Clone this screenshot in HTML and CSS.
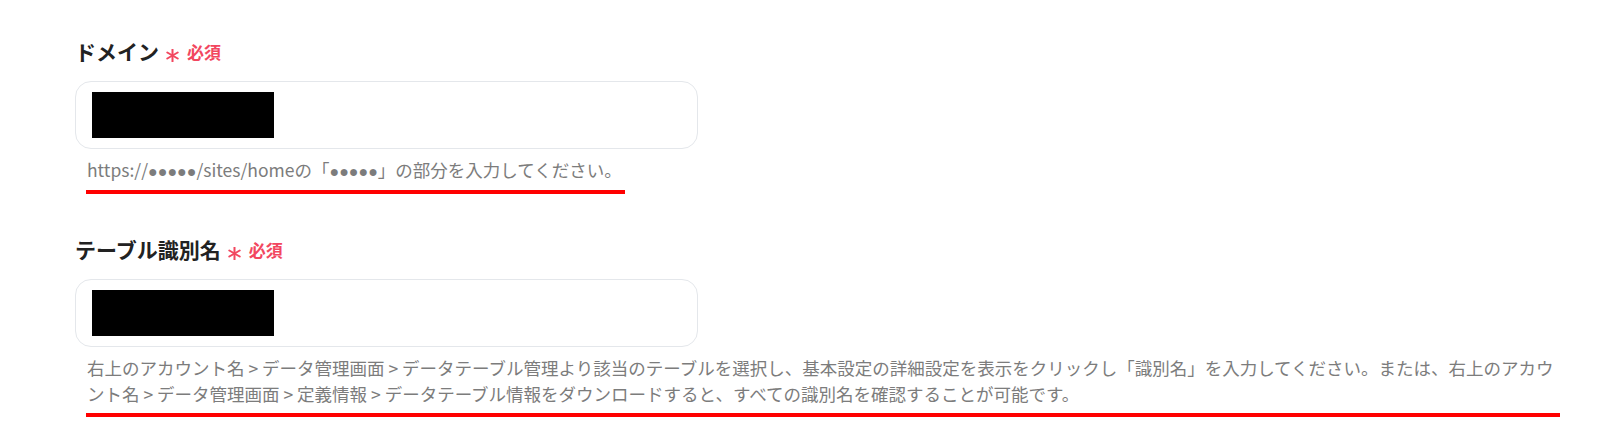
FILE: index.html
```html
<!DOCTYPE html>
<html lang="ja">
<head>
<meta charset="utf-8">
<title>設定</title>
<link rel="stylesheet" href="styles.css">
</head>
<body>
<div class="form">
  <section class="field field-domain">
    <div class="label-row">
      <span class="label">ドメイン</span>
      <span class="req">
        <svg class="ast" viewBox="0 0 13 13" width="13" height="13" aria-hidden="true">
          <line x1="6.5" y1="0.5" x2="6.5" y2="12.5"/>
          <line x1="1.3" y1="3.5" x2="11.7" y2="9.5"/>
          <line x1="1.3" y1="9.5" x2="11.7" y2="3.5"/>
        </svg>
        <span class="req-text">必須</span>
      </span>
    </div>
    <div class="input"><div class="redact"></div></div>
    <p class="help"><span class="line">https://<span class="dots">●●●●●</span>/sites/homeの「<span class="dots">●●●●●</span>」の部分を入力してください。</span></p>
    <div class="mark mark-short"></div>
  </section>

  <section class="field field-table">
    <div class="label-row">
      <span class="label">テーブル識別名</span>
      <span class="req">
        <svg class="ast" viewBox="0 0 13 13" width="13" height="13" aria-hidden="true">
          <line x1="6.5" y1="0.5" x2="6.5" y2="12.5"/>
          <line x1="1.3" y1="3.5" x2="11.7" y2="9.5"/>
          <line x1="1.3" y1="9.5" x2="11.7" y2="3.5"/>
        </svg>
        <span class="req-text">必須</span>
      </span>
    </div>
    <div class="input"><div class="redact"></div></div>
    <p class="help"><span class="line">右上のアカウント名 &gt; データ管理画面 &gt; データテーブル管理より該当のテーブルを選択し、基本設定の詳細設定を表示をクリックし「識別名」を入力してください。または、右上のアカウ</span><span class="line">ント名 &gt; データ管理画面 &gt; 定義情報 &gt; データテーブル情報をダウンロードすると、すべての識別名を確認することが可能です。</span></p>
    <div class="mark mark-long"></div>
  </section>
</div>
</body>
</html>
```

FILE: styles.css
```css
html, body {
  margin: 0;
  padding: 0;
  background: #ffffff;
}

body {
  width: 1600px;
  height: 445px;
  overflow: hidden;
  font-family: "Noto Sans CJK JP", "Noto Sans", sans-serif;
}

.form {
  display: flex;
  flex-direction: column;
  padding: 36px 0 0 75px;
}

.field {
  display: flex;
  flex-direction: column;
  align-items: flex-start;
}

.field-table {
  margin-top: 40px;
}

.label-row {
  display: flex;
  align-items: center;
  height: 30px;
}

.label {
  font-size: 21px;
  font-weight: 700;
  color: #222222;
  line-height: 30px;
}

.req {
  display: flex;
  align-items: center;
  margin-left: 7px;
  color: #f2475f;
}

.ast {
  display: block;
  margin-top: 9px;
  stroke: #f2475f;
  stroke-width: 2;
  stroke-linecap: round;
  fill: none;
}

.req-text {
  margin-left: 8px;
  font-size: 17px;
  font-weight: 700;
  line-height: 30px;
  margin-top: 2px;
}

.input {
  box-sizing: border-box;
  width: 623px;
  height: 68px;
  margin-top: 15px;
  border: 1.5px solid #e4e7eb;
  border-radius: 16px;
  background: #ffffff;
  padding: 10px 0 0 16px;
}

.redact {
  width: 182px;
  height: 46px;
  background: #000000;
}

.help {
  margin: 8px 0 0 12px;
  font-size: 17.5px;
  line-height: 26.5px;
  color: #7c7c7c;
}

.help .line {
  display: block;
  white-space: nowrap;
}

.dots {
  font-family: "Liberation Sans", sans-serif;
  font-size: 16px;
}

.mark {
  height: 4px;
  margin: 4px 0 0 11px;
  background: #ff0000;
}

.field-table .mark {
  margin-top: 5px;
}

.mark-short {
  width: 539px;
}

.mark-long {
  width: 1474px;
}
```
